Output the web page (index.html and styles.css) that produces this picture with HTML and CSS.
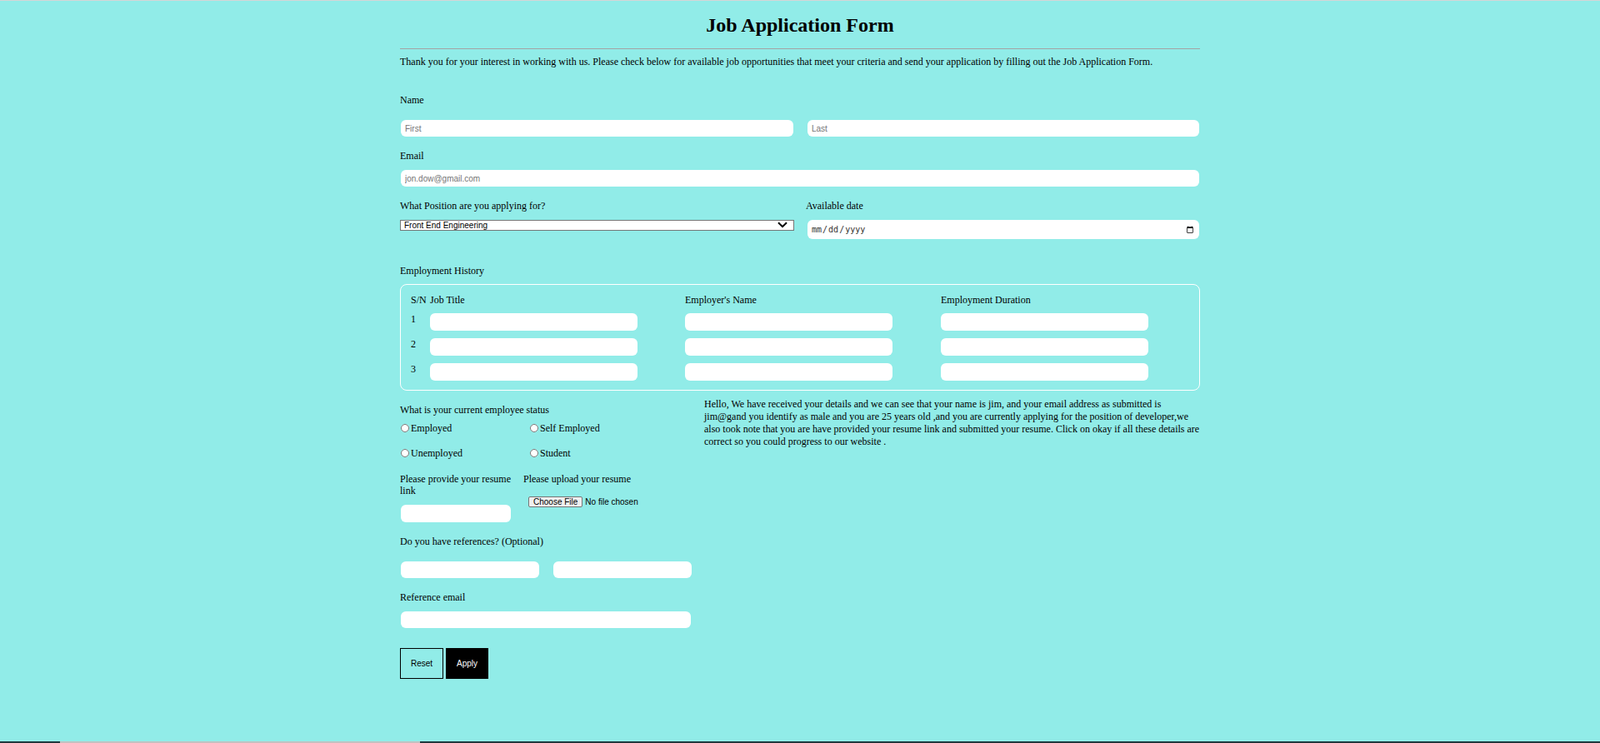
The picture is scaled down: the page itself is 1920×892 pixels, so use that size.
FILE: index.html
```html
<!DOCTYPE html>
<html lang="en">
<head>
<meta charset="utf-8">
<title>Job Application Form</title>
<link rel="stylesheet" href="styles.css">
</head>
<body>
<main class="page">
  <h1 class="title">Job Application Form</h1>
  <hr class="rule">
  <p class="intro">Thank you for your interest in working with us. Please check below for available job opportunities that meet your criteria and send your application by filling out the Job Application Form.</p>

  <form class="form">
    <div class="label label-name">Name</div>
    <div class="pair pair-name">
      <input class="field field-left" type="text" placeholder="First">
      <input class="field field-right" type="text" placeholder="Last">
    </div>

    <div class="label label-gap">Email</div>
    <input class="field field-email" type="email" placeholder="jon.dow@gmail.com">

    <div class="pair pair-position">
      <div class="col">
        <div class="label">What Position are you applying for?</div>
        <div class="select-wrap">
          <select class="select">
            <option>Front End Engineering</option>
            <option>Back End Engineering</option>
            <option>Product Design</option>
          </select>
          <svg class="chevron" width="12" height="8" viewBox="0 0 12 8" aria-hidden="true"><path d="M1 1.2 L6 6.2 L11 1.2" fill="none" stroke="#000" stroke-width="2"/></svg>
        </div>
      </div>
      <div class="col">
        <div class="label">Available date</div>
        <input class="date" type="date">
      </div>
    </div>

    <div class="label label-history">Employment History</div>
    <div class="history">
      <div class="hcell">S/N</div>
      <div class="hcell">Job Title</div>
      <div class="hcell">Employer's Name</div>
      <div class="hcell">Employment Duration</div>

      <div class="num">1</div>
      <input class="field cell" type="text">
      <input class="field cell" type="text">
      <input class="field cell" type="text">

      <div class="num">2</div>
      <input class="field cell" type="text">
      <input class="field cell" type="text">
      <input class="field cell" type="text">

      <div class="num">3</div>
      <input class="field cell" type="text">
      <input class="field cell" type="text">
      <input class="field cell" type="text">
    </div>

    <div class="lower">
      <div class="left">
        <div class="label">What is your current employee status</div>
        <div class="radios">
          <label class="radio"><input type="radio" name="status">Employed</label>
          <label class="radio"><input type="radio" name="status">Self Employed</label>
          <label class="radio"><input type="radio" name="status">Unemployed</label>
          <label class="radio"><input type="radio" name="status">Student</label>
        </div>

        <div class="resume">
          <div class="resume-link">
            <div class="label">Please provide your resume link</div>
            <input class="field field-link" type="url">
          </div>
          <div class="resume-file">
            <div class="label">Please upload your resume</div>
            <input class="file" type="file">
          </div>
        </div>

        <div class="label label-gap">Do you have references? (Optional)</div>
        <div class="refs">
          <input class="field field-ref" type="text">
          <input class="field field-ref" type="text">
        </div>

        <div class="label label-gap">Reference email</div>
        <input class="field field-refmail" type="email">

        <div class="actions">
          <button class="btn btn-reset" type="reset">Reset</button>
          <button class="btn btn-apply" type="button">Apply</button>
        </div>
      </div>

      <p class="summary">Hello, We have received your details and we can see that your name is jim, and your email address as submitted is jim@gand you identify as male and you are 25 years old ,and you are currently applying for the position of developer,we also took note that you are have provided your resume link and submitted your resume. Click on okay if all these details are correct so you could progress to our website .</p>
    </div>
  </form>
</main>
<div class="strip"><div class="strip-thumb"></div></div>
</body>
</html>
```

FILE: styles.css
```css
html, body {
  margin: 0;
  padding: 0;
}

body {
  background: #91ece8;
  color: #000;
  font-family: "Liberation Serif", "Times New Roman", serif;
  font-size: 12px;
  line-height: 14px;
  border-top: 1px solid #d6d6d6;
  min-height: 100vh;
  box-sizing: border-box;
  display: flex;
  flex-direction: column;
}

.page {
  width: 960px;
  margin: 0 auto;
}

.title {
  margin: 15px 0 0;
  font-size: 24px;
  line-height: 28px;
  font-weight: bold;
  text-align: center;
}

.rule {
  margin: 14px 0 0;
  height: 0;
  border: 0;
  border-top: 1px solid #a3a3a3;
}

.intro {
  margin: 8px 0 0;
}

.form {
  margin: 0;
}

.label {
  display: block;
}

.label-name {
  margin-top: 32px;
}

.label-gap {
  margin-top: 16px;
}

.pair {
  display: grid;
  grid-template-columns: 473px 1fr;
  column-gap: 14px;
}

.pair-name {
  margin-top: 17px;
}

.pair-position {
  margin-top: 16px;
}

.col {
  display: flex;
  flex-direction: column;
  align-items: flex-start;
}

.field {
  display: block;
  box-sizing: border-box;
  height: 20px;
  border: 0;
  border-radius: 6px;
  background: #fff;
  padding: 0 5px;
  font-family: "Liberation Sans", Arial, sans-serif;
  font-size: 10px;
  color: #000;
  outline: none;
}

.field::placeholder {
  color: #757575;
}

.field-left {
  margin-left: 1px;
  width: 471px;
}

.field-right {
  margin-left: 2px;
  width: 470px;
}

.field-email {
  margin: 10px 0 0 1px;
  width: 958px;
}

.select-wrap {
  position: relative;
  margin-top: 10px;
  width: 473px;
  height: 13px;
}

.select {
  display: block;
  -webkit-appearance: none;
  appearance: none;
  width: 473px;
  height: 13px;
  box-sizing: border-box;
  border: 1px solid #767676;
  border-radius: 0;
  background: #fff;
  padding: 0 20px 0 4px;
  margin: 0;
  font-family: "Liberation Sans", Arial, sans-serif;
  font-size: 10px;
  line-height: 11px;
  color: #000;
  outline: none;
}

.chevron {
  position: absolute;
  right: 8px;
  top: 2px;
  pointer-events: none;
}

.date {
  margin: 10px 0 0 2px;
  width: 470px;
  height: 23px;
  box-sizing: border-box;
  border: 0;
  border-radius: 6px;
  background: #fff;
  padding: 0 4px;
  font-family: "DejaVu Sans Mono", "Liberation Mono", monospace;
  font-size: 10px;
  color: #333;
}

.label-history {
  margin-top: 31px;
}

.history {
  margin-top: 9px;
  border: 1px solid #fff;
  border-radius: 8px;
  padding: 11px 0 11px 12px;
  display: grid;
  grid-template-columns: 23px 306px 307px 1fr;
  row-gap: 9px;
  align-items: start;
}

.hcell {
  white-space: nowrap;
}

.num {
  line-height: 14px;
}

.cell {
  width: 249px;
  height: 21px;
}

.lower {
  margin-top: 9px;
  display: flex;
  align-items: flex-start;
}

.left {
  width: 350px;
  flex: none;
  padding-top: 7px;
}

.radios {
  margin-top: 8px;
  display: grid;
  grid-template-columns: 155px 1fr;
  row-gap: 16px;
}

.radio {
  display: flex;
  align-items: center;
  height: 14px;
}

.radio input {
  width: 10px;
  height: 10px;
  margin: 0 2px 0 1px;
}

.resume {
  margin-top: 17px;
  display: flex;
  align-items: flex-start;
}

.resume-link {
  width: 140px;
  flex: none;
}

.field-link {
  margin: 10px 0 0 1px;
  width: 132px;
  height: 21px;
}

.resume-file {
  margin-left: 8px;
}

.file {
  display: block;
  margin: 14px 0 0 6px;
  font-family: "Liberation Sans", Arial, sans-serif;
  font-size: 10px;
  color: #000;
}

.file::file-selector-button {
  font-family: "Liberation Sans", Arial, sans-serif;
  font-size: 10px;
  height: 13px;
  padding: 0 5px;
  margin-right: 3px;
  border: 1px solid #767676;
  border-radius: 2px;
  background: #efefef;
  color: #000;
}

.refs {
  margin-top: 17px;
  display: flex;
  gap: 17px;
}

.field-ref {
  width: 166px;
}

.refs .field-ref:first-child {
  margin-left: 1px;
}

.field-refmail {
  margin: 10px 0 0 1px;
  width: 348px;
}

.actions {
  margin-top: 24px;
  display: flex;
  gap: 3px;
}

.btn {
  height: 37px;
  box-sizing: border-box;
  padding: 0;
  border-radius: 0;
  font-family: "Liberation Sans", Arial, sans-serif;
  font-size: 10px;
  cursor: pointer;
}

.btn-reset {
  width: 52px;
  border: 1px solid #000;
  background: transparent;
  color: #000;
}

.btn-apply {
  width: 51px;
  border: 1px solid #000;
  background: #000;
  color: #fff;
}

.summary {
  margin: 0 0 0 15px;
  width: 597px;
  line-height: 15px;
}

.strip {
  margin-top: auto;
  height: 2px;
  background: #1f383d;
  display: flex;
}

.strip-thumb {
  margin-left: 72px;
  width: 432px;
  background: #c1c1c1;
}
```
